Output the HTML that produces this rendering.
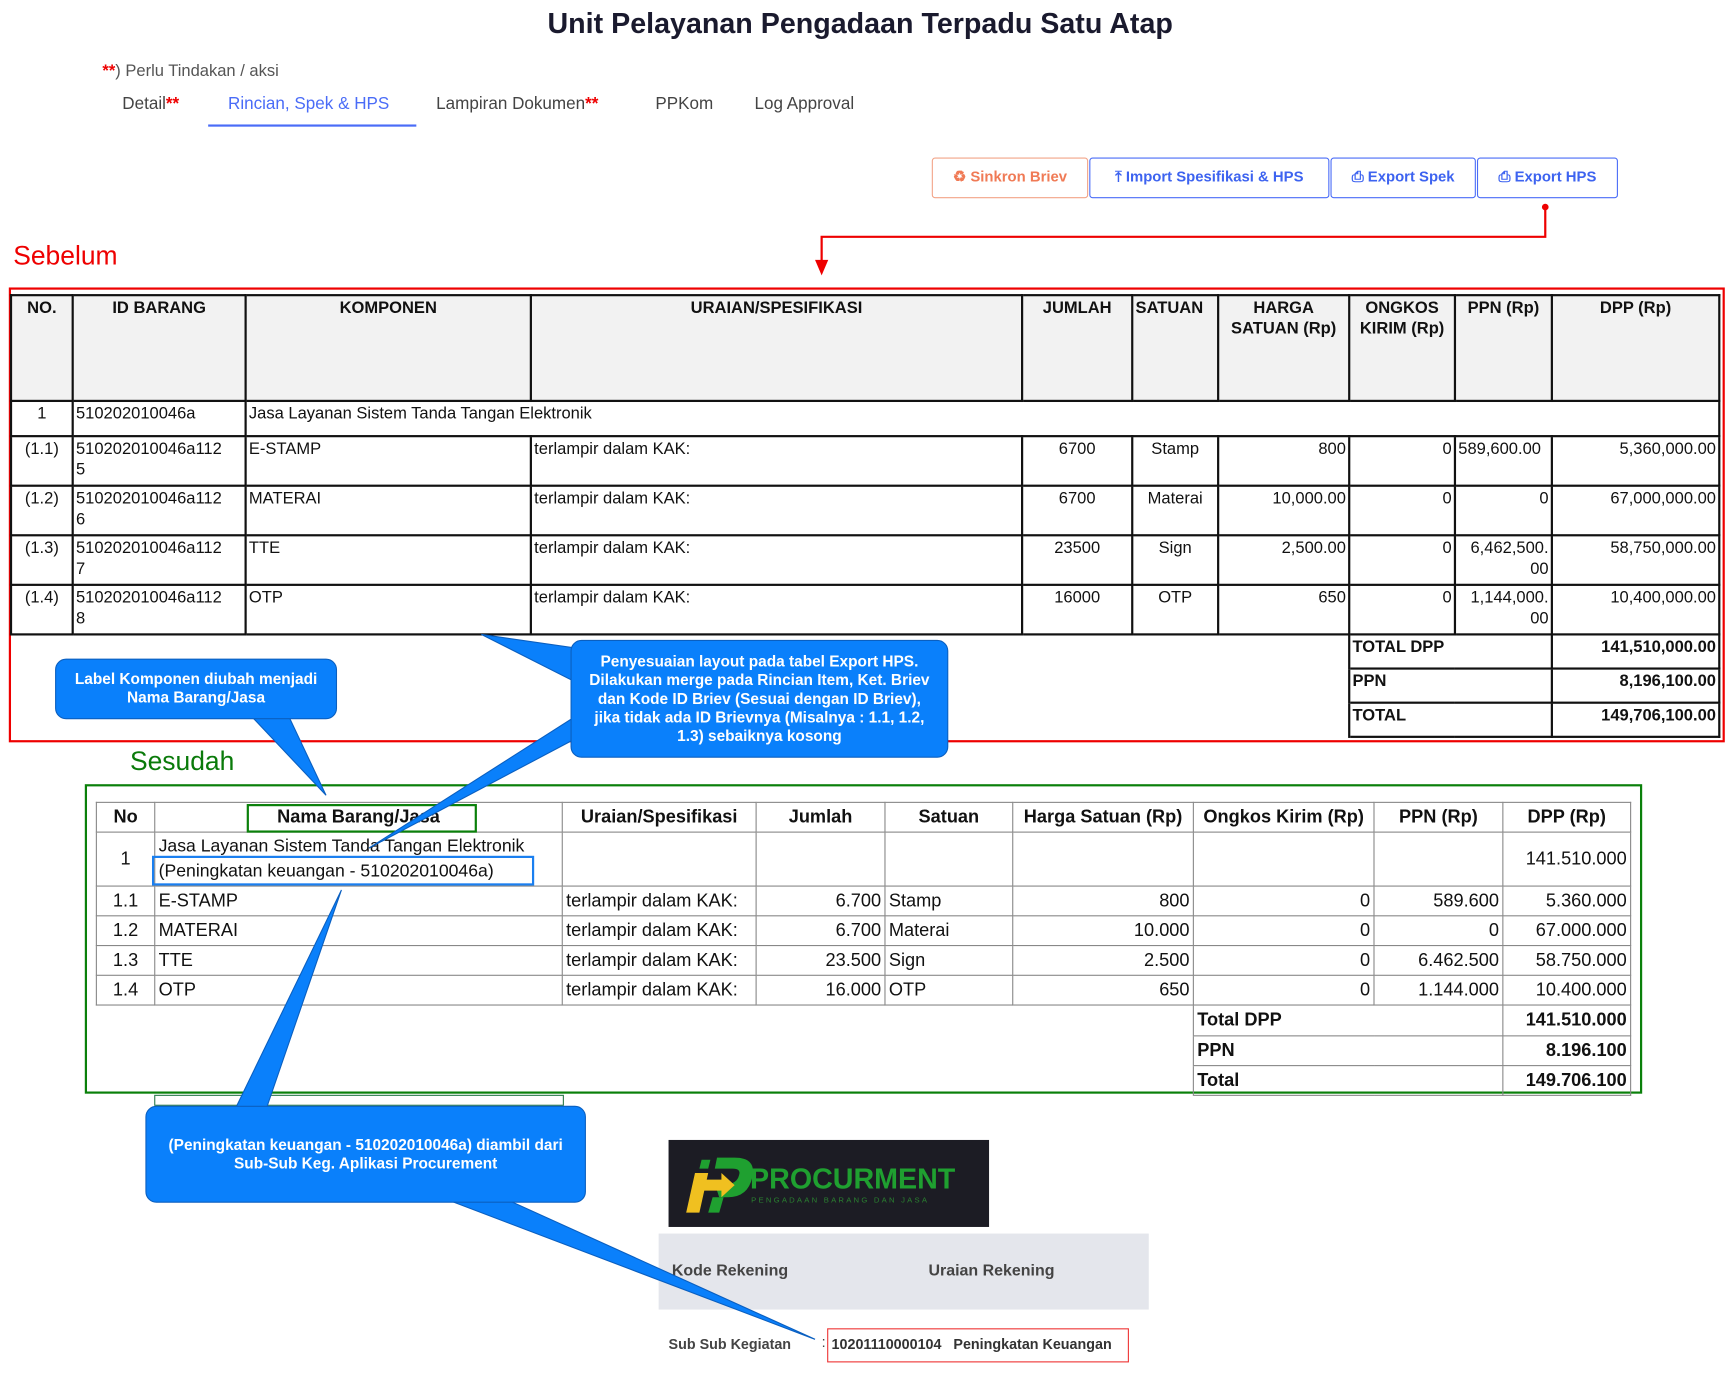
<!DOCTYPE html>
<html><head><meta charset="utf-8">
<style>
*{margin:0;padding:0;box-sizing:border-box}
body{width:1727px;height:1382px;overflow:hidden;background:#fff;font-family:"Liberation Sans",sans-serif}
#s{position:absolute;left:0;top:0;width:1568px;height:1255px;transform:scale(1.1014);transform-origin:0 0}
.a{position:absolute;white-space:nowrap}
table{border-collapse:collapse;table-layout:fixed;position:absolute}
.t1 td{border:2px solid #111;font-size:15px;color:#111;vertical-align:top;padding:1px 2px;line-height:19px;overflow:hidden}
.t1 .h td{background:#f2f2f2;font-weight:bold;text-align:center;font-size:15px}
.t1 .r{text-align:right}.t1 .c{text-align:center}
.t1 td.n{border:none;border-right:2px solid #111}
.t2 td{border:1px solid #888;font-size:16.5px;color:#111;padding:0 3px;line-height:21px;overflow:hidden;white-space:nowrap}
.t2 .h td{font-weight:bold;text-align:center}
.t2 .r{text-align:right}.t2 .c{text-align:center}
.t2 td.n{border:none;border-right:1px solid #888}
.btn{position:absolute;top:143px;height:37px;border:1px solid #4a6cf7;border-radius:3px;color:#3d63f0;font-weight:bold;font-size:13.5px;text-align:center;line-height:34px}
.co{position:absolute;background:#0a80fb;border-radius:10px;color:#fff;font-weight:bold;font-size:14px;text-align:center;line-height:17px;border:1px solid #0a5fc0;z-index:6}
</style></head><body><div id="s">
<div class="a" style="left:0;width:1562px;text-align:center;top:6px;font-size:26px;font-weight:bold;color:#1a1a2e">Unit Pelayanan Pengadaan Terpadu Satu Atap</div>
<div class="a" style="left:93px;top:56px;font-size:15px;color:#555"><span style="color:#e00;font-weight:bold">**</span>) Perlu Tindakan / aksi</div>
<div class="a" style="left:111px;top:86px;font-size:15.5px;color:#444">Detail<span style="color:#e00;font-weight:bold">**</span></div>
<div class="a" style="left:207px;top:86px;font-size:15.5px;color:#4a6cf7">Rincian, Spek &amp; HPS</div>
<div class="a" style="left:189px;top:113px;width:189px;height:2px;background:#4a6cf7"></div>
<div class="a" style="left:396px;top:86px;font-size:15.5px;color:#444">Lampiran Dokumen<span style="color:#e00;font-weight:bold">**</span></div>
<div class="a" style="left:595px;top:86px;font-size:15.5px;color:#444">PPKom</div>
<div class="a" style="left:685px;top:86px;font-size:15.5px;color:#444">Log Approval</div>
<div class="btn" style="left:846px;width:142px;border-color:#f2a488;color:#f07a55">♻ Sinkron Briev</div>
<div class="btn" style="left:989px;width:218px">⤒ Import Spesifikasi &amp; HPS</div>
<div class="btn" style="left:1208px;width:132px">⎙ Export Spek</div>
<div class="btn" style="left:1341px;width:128px">⎙ Export HPS</div>
<svg class="a" style="left:0;top:0" width="1568" height="260"><circle cx="1403" cy="188" r="3" fill="#e00"/><path d="M1403 188V215H746V238" stroke="#e00" stroke-width="2" fill="none"/><path d="M740 236L746 250L752 236Z" fill="#e00"/></svg>
<div class="a" style="left:12px;top:219px;font-size:24px;color:#e00">Sebelum</div>
<div class="a" style="left:8px;top:261px;width:1558px;height:413px;border:2px solid #e00"></div>
<table class="t1" style="left:9px;top:267px;width:1551px">
<colgroup><col style="width:56px"><col style="width:157px"><col style="width:259px"><col style="width:446px"><col style="width:100px"><col style="width:78px"><col style="width:119px"><col style="width:96px"><col style="width:88px"><col style="width:152px"></colgroup>
<tr class="h" style="height:96px"><td>NO.</td><td>ID BARANG</td><td>KOMPONEN</td><td>URAIAN/SPESIFIKASI</td><td>JUMLAH</td><td style="text-align:left">SATUAN</td><td>HARGA SATUAN (Rp)</td><td>ONGKOS KIRIM (Rp)</td><td>PPN (Rp)</td><td>DPP (Rp)</td></tr>
<tr style="height:32px"><td class="c">1</td><td>510202010046a</td><td colspan="8">Jasa Layanan Sistem Tanda Tangan Elektronik</td></tr>
<tr style="height:45px"><td class="c">(1.1)</td><td>510202010046a112<br>5</td><td>E-STAMP</td><td>terlampir dalam KAK:</td><td class="c">6700</td><td class="c">Stamp</td><td class="r">800</td><td class="r">0</td><td>589,600.00</td><td class="r">5,360,000.00</td></tr>
<tr style="height:45px"><td class="c">(1.2)</td><td>510202010046a112<br>6</td><td>MATERAI</td><td>terlampir dalam KAK:</td><td class="c">6700</td><td class="c">Materai</td><td class="r">10,000.00</td><td class="r">0</td><td class="r">0</td><td class="r">67,000,000.00</td></tr>
<tr style="height:45px"><td class="c">(1.3)</td><td>510202010046a112<br>7</td><td>TTE</td><td>terlampir dalam KAK:</td><td class="c">23500</td><td class="c">Sign</td><td class="r">2,500.00</td><td class="r">0</td><td class="r">6,462,500.<br>00</td><td class="r">58,750,000.00</td></tr>
<tr style="height:45px"><td class="c">(1.4)</td><td>510202010046a112<br>8</td><td>OTP</td><td>terlampir dalam KAK:</td><td class="c">16000</td><td class="c">OTP</td><td class="r">650</td><td class="r">0</td><td class="r">1,144,000.<br>00</td><td class="r">10,400,000.00</td></tr>
<tr style="height:31px"><td class="n" colspan="7" style="border-top:2px solid #111"></td><td colspan="2" style="font-weight:bold">TOTAL DPP</td><td class="r" style="font-weight:bold">141,510,000.00</td></tr>
<tr style="height:31px"><td class="n" colspan="7"></td><td colspan="2" style="font-weight:bold">PPN</td><td class="r" style="font-weight:bold">8,196,100.00</td></tr>
<tr style="height:31px"><td class="n" colspan="7"></td><td colspan="2" style="font-weight:bold">TOTAL</td><td class="r" style="font-weight:bold">149,706,100.00</td></tr>
</table>
<div class="a" style="left:118px;top:678px;font-size:24px;color:#0a7a0a">Sesudah</div>
<div class="a" style="left:77px;top:712px;width:1414px;height:281px;border:2px solid #0a800a"></div>
<table class="t2" style="left:87px;top:728px;width:1393px">
<colgroup><col style="width:53px"><col style="width:370px"><col style="width:176px"><col style="width:117px"><col style="width:116px"><col style="width:164px"><col style="width:164px"><col style="width:117px"><col style="width:116px"></colgroup>
<tr class="h" style="height:27px"><td>No</td><td>Nama Barang/Jasa</td><td>Uraian/Spesifikasi</td><td>Jumlah</td><td>Satuan</td><td>Harga Satuan (Rp)</td><td>Ongkos Kirim (Rp)</td><td>PPN (Rp)</td><td>DPP (Rp)</td></tr>
<tr style="height:49px"><td class="c">1</td><td style="line-height:23px;font-size:16px">Jasa Layanan Sistem Tanda Tangan Elektronik<br>(Peningkatan keuangan - 510202010046a)</td><td></td><td></td><td></td><td></td><td></td><td></td><td class="r">141.510.000</td></tr>
<tr style="height:27px"><td class="c">1.1</td><td>E-STAMP</td><td>terlampir dalam KAK:</td><td class="r">6.700</td><td>Stamp</td><td class="r">800</td><td class="r">0</td><td class="r">589.600</td><td class="r">5.360.000</td></tr>
<tr style="height:27px"><td class="c">1.2</td><td>MATERAI</td><td>terlampir dalam KAK:</td><td class="r">6.700</td><td>Materai</td><td class="r">10.000</td><td class="r">0</td><td class="r">0</td><td class="r">67.000.000</td></tr>
<tr style="height:27px"><td class="c">1.3</td><td>TTE</td><td>terlampir dalam KAK:</td><td class="r">23.500</td><td>Sign</td><td class="r">2.500</td><td class="r">0</td><td class="r">6.462.500</td><td class="r">58.750.000</td></tr>
<tr style="height:27px"><td class="c">1.4</td><td>OTP</td><td>terlampir dalam KAK:</td><td class="r">16.000</td><td>OTP</td><td class="r">650</td><td class="r">0</td><td class="r">1.144.000</td><td class="r">10.400.000</td></tr>
<tr style="height:28px"><td class="n" colspan="6" style="border-top:1px solid #888"></td><td colspan="2" style="font-weight:bold">Total DPP</td><td class="r" style="font-weight:bold">141.510.000</td></tr>
<tr style="height:27px"><td class="n" colspan="6"></td><td colspan="2" style="font-weight:bold">PPN</td><td class="r" style="font-weight:bold">8.196.100</td></tr>
<tr style="height:27px"><td class="n" colspan="6"></td><td colspan="2" style="font-weight:bold">Total</td><td class="r" style="font-weight:bold">149.706.100</td></tr>
</table>
<div class="a" style="left:224px;top:730px;width:209px;height:26px;border:2px solid #0a800a"></div>
<div class="a" style="left:138px;top:777px;width:347px;height:27px;border:2px solid #1a7ff0"></div>
<div class="a" style="left:140px;top:994px;width:372px;height:10px;border:1px solid #2a7a4a"></div>
<div class="a" style="left:607px;top:1035px;width:291px;height:79px;background:#1c1c24"></div>
<svg class="a" style="left:607px;top:1035px" width="291" height="79">
<path d="M30 18L38 18L36 26L28 26Z" fill="#1fa030"/>
<path d="M44 16L60 16Q80 16 76 34Q72 52 54 52L46 52L42 40L52 40Q62 40 64 32Q66 26 58 26L42 26Z" fill="#1fa030"/>
<path d="M24 30L36 30L28 66L16 66Z" fill="#f0c020"/>
<path d="M30 36L48 36L48 30L60 41L48 52L48 46L28 46Z" fill="#f0c020"/>
<path d="M40 52L50 52L46 66L36 66Z" fill="#1fa030"/>
</svg>
<div class="a" style="left:681px;top:1055px;font-size:26px;font-weight:bold;color:#1fa030">PROCURMENT</div>
<div class="a" style="left:682px;top:1087px;font-size:7px;color:#2a8030;letter-spacing:2px">PENGADAAN BARANG DAN JASA</div>
<div class="a" style="left:598px;top:1120px;width:445px;height:69px;background:#e4e6ec"></div>
<div class="a" style="left:610px;top:1146px;font-size:14.5px;font-weight:bold;color:#444">Kode Rekening</div>
<div class="a" style="left:843px;top:1146px;font-size:14.5px;font-weight:bold;color:#444">Uraian Rekening</div>
<div class="a" style="left:607px;top:1213px;font-size:13px;font-weight:bold;color:#444">Sub Sub Kegiatan</div>
<div class="a" style="left:746px;top:1211px;font-size:13px;color:#444">:</div>
<div class="a" style="left:751px;top:1206px;width:274px;height:31px;border:1.5px solid #e33"></div>
<div class="a" style="left:755px;top:1213px;font-size:13px;font-weight:bold;color:#333">10201110000104 &nbsp;&nbsp;Peningkatan Keuangan</div>
<svg class="a" style="left:0;top:0;z-index:5" width="1568" height="1255">
<g fill="#0a80fb" stroke="#0a5fc0" stroke-width="1">
<path d="M228 650L262 650L296 722Z"/>
<path d="M520 588L520 618L437 576Z"/>
<path d="M520 652L520 672L335 770Z"/>
<path d="M214 1006L242 1006L310 808Z"/>
<path d="M408 1090L462 1090L740 1216Z"/>
</g></svg>
<div class="co" style="left:50px;top:598px;width:256px;height:55px;padding-top:9px">Label Komponen diubah menjadi<br>Nama Barang/Jasa</div>
<div class="co" style="left:518px;top:581px;width:343px;height:107px;padding-top:10px">Penyesuaian layout pada tabel Export HPS.<br>Dilakukan merge pada Rincian Item, Ket. Briev<br>dan Kode ID Briev (Sesuai dengan ID Briev),<br>jika tidak ada ID Brievnya (Misalnya : 1.1, 1.2,<br>1.3) sebaiknya kosong</div>
<div class="co" style="left:132px;top:1004px;width:400px;height:88px;padding-top:26px">(Peningkatan keuangan - 510202010046a) diambil dari<br>Sub-Sub Keg. Aplikasi Procurement</div>
</div></body></html>
